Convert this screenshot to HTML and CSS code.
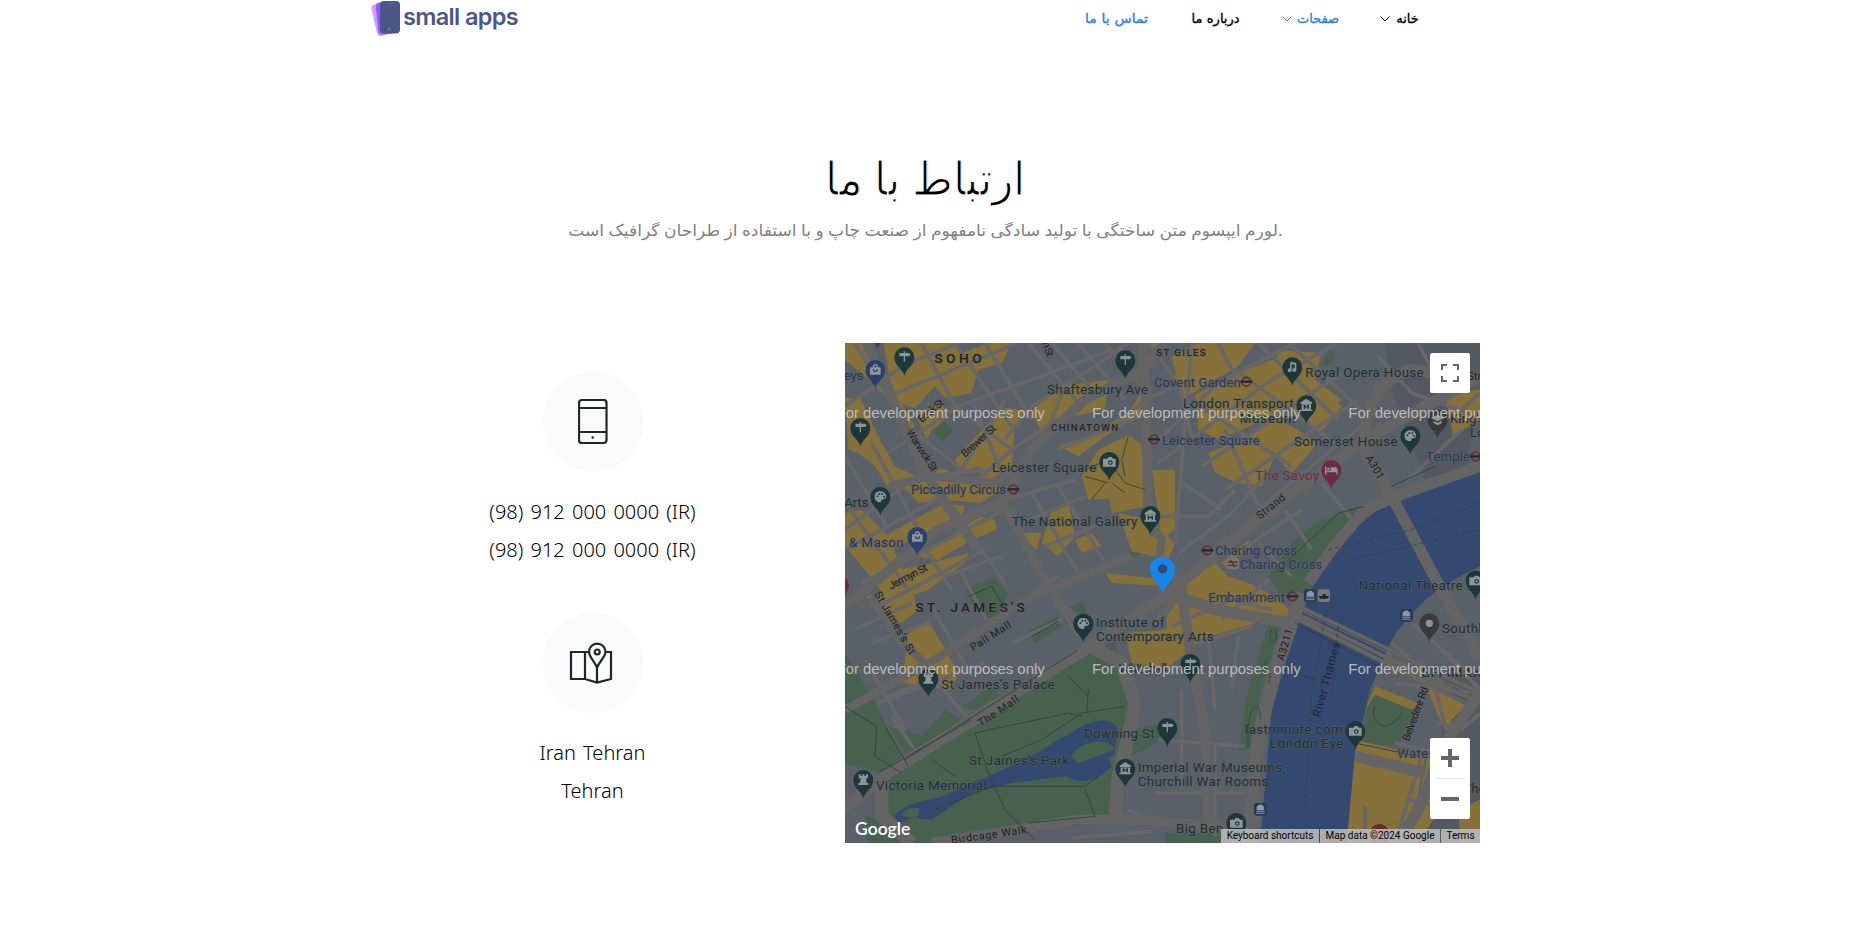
FILE: index.html
```html
<!DOCTYPE html>
<html lang="fa">
<head>
<meta charset="utf-8">
<title>small apps</title>
<link rel="stylesheet" href="styles.css">
</head>
<body>
<header class="navbar">
  <a class="logo">
    <svg class="logo-mark" width="30" height="36" viewBox="0 0 30 36">
      <rect x="3" y="3" width="19" height="32" rx="4" fill="#d09bfb" transform="rotate(-13 12 19)"/>
      <rect x="6" y="2" width="19" height="32" rx="4" fill="#9357fb" transform="rotate(-6 15 18)"/>
      <rect x="9" y="1" width="20" height="32.500" rx="4" fill="#495788"/>
      <path d="M16 3.500h6" stroke="#5d6ba2" stroke-width="1"/>
      <circle cx="18" cy="29" r="1.700" fill="#6271aa"/>
    </svg>
    <span class="logo-text">small apps</span>
  </a>
  <nav class="menu" dir="rtl">
    <a class="item home"><span>خانه</span><svg class="chev" width="10" height="6" viewBox="0 0 10 6"><path d="M.5.5 5 5 9.500.5"/></svg></a>
    <a class="item pages active"><span>صفحات</span><svg class="chev" width="10" height="6" viewBox="0 0 10 6"><path d="M.5.5 5 5 9.500.5"/></svg></a>
    <a class="item about"><span>درباره ما</span></a>
    <a class="item contact active"><span>تماس با ما</span></a>
  </nav>
</header>
<section class="intro">
  <h1><span>ارتباط با ما</span></h1>
  <p><span>لورم ایپسوم متن ساختگی با تولید سادگی نامفهوم از صنعت چاپ و با استفاده از طراحان گرافیک است.</span></p>
</section>
<main class="row">
  <div class="details">
    <div class="card">
      <div class="disc"><svg width="30" height="46" viewBox="0 0 30 46" class="line"><rect x="1" y="1" width="27.500" height="43" rx="3"/><path d="M1 9h27.500M1 33h27.500"/><circle cx="14.700" cy="38.500" r="1.200" class="dot"/></svg></div>
      <p>(98) 912 000 0000 (IR)</p>
      <p>(98) 912 000 0000 (IR)</p>
    </div>
    <div class="card">
      <div class="disc place"><svg width="44" height="42" viewBox="0 0 44 42" class="line"><path d="M21 10H2v27h14l12 3.500L42 37V10h-5M16 10v27M28 26v14"/><path d="M28 25.500C26 20 20 15 20 9.800a8 8 0 0 1 16.500 0C36.500 15 30 20 28 25.500z"/><circle cx="28.200" cy="10" r="2.500"/></svg></div>
      <p>Iran Tehran</p>
      <p>Tehran</p>
    </div>
  </div>
  <div class="map">
    <svg class="canvas" width="635" height="500" viewBox="0 0 1905 1500">
      <defs>
        <path id="pin" d="M0 56C-3 36-30 26-30 0A30 30 0 1 1 30 0C30 26 3 36 0 56z"/>
        <g id="sign"><use href="#pin"/><path class="g" d="M-2-18h4v5h12l5 5-5 5H2v16h-4V-3h-13v-10h13z"/></g>
        <g id="bag"><use href="#pin"/><path class="g" fill-rule="evenodd" d="M-16-8h8c0-13 16-13 16 0h8v22h-32zM-4-8h8c0-7-8-7-8 0zM-8-2c0 12 16 12 16 0h-4c0 6-8 6-8 0z"/></g>
        <g id="art"><use href="#pin"/><path class="g" d="M0-17C-24-17-22 16-1 16c8 0 0-9 8-9C25 8 18-17 0-17z"/><g class="hole"><circle cx="-9" cy="-2" r="3"/><circle cx="-3" cy="-9" r="3"/><circle cx="6" cy="-9" r="3"/><circle cx="11" cy="-1" r="3"/></g></g>
        <g id="museum"><use href="#pin"/><path class="g" fill-rule="evenodd" d="M0-20 17-9v5H-17v-5zM-14-3h28v16h4v4h-36v-4h4zM-8 11h4V4l4 5 4-5v7h4V-1H4L0 4-4-1h-4z"/></g>
        <g id="camera"><use href="#pin"/><path class="g" fill-rule="evenodd" d="M-19-10h13l4-5h9l4 5h8v24h-38zM3-5a7 7 0 1 0 .1 0z"/><circle class="g" cx="3" cy="2" r="3.500"/></g>
        <g id="castle"><use href="#pin"/><path class="g" d="M-14-17h6v5h5v-5h6v5h5v-5h6V-5H8L10 9h5v6h-30V9h5l2-14h-6z"/></g>
        <g id="music"><use href="#pin"/><path class="g" d="M-6-17 12-13V8a6 6 0 1 1-5-6V-8l-9-2V9a6 6 0 1 1-5-6z"/></g>
        <g id="bed"><use href="#pin"/><path class="g" d="M-19-11h4V2H-2V-8h16l5 5v17h-4V7h-30v7h-4z"/><circle class="g" cx="-9" cy="-3" r="4"/></g>
        <g id="dot"><use href="#pin"/><circle class="g" r="11"/></g>
        <g id="school"><use href="#pin"/><path class="g" d="M0-15 20-5 0 5-20-5zM-12 3 0 9 12 3v8L0 17l-12-6z"/></g>
        <g id="tube"><circle r="13" fill="none" stroke="#6d2a2b" stroke-width="5"/><path d="M-18-3.500h36v7h-36z" fill="#1f2940"/></g>
        <g id="pier"><rect x="-19" y="-19" width="38" height="38" rx="7" fill="#243957"/><path d="M-10 2V-9h5v-4h10v4h5V2zM-13 7h26M-13 12h26" fill="#92989f" stroke="#92989f" stroke-width="2.500"/></g>
      </defs>
      <rect width="1905" height="1500" fill="#596067"/>
      <g fill="#545860"><path d="M1620 0H1905V200L1850 390 1740 410 1640 140z"/><path d="M1800 990 1905 1000V1500H1680L1790 1190z"/></g>
      <!-- parks -->
      <g fill="#47614e">
        <path d="M0 930 90 1080 185 1270 110 1290 0 1260z"/>
        <path d="M115 1310 390 1150 690 950 765 915 830 970 870 1150 800 1440 550 1460 260 1500H130L110 1400z"/>
        <path d="M360 735 450 705 490 750 460 820 420 825 375 780z"/>
        <path d="M550 865 640 820 650 850 570 900zM660 800 715 775 725 810 675 830zM770 915 810 895 820 950zM870 1160 950 1140 950 1190 860 1240z"/>
        <path d="M280 250 300 235 325 265 295 295 268 275z"/><path d="M130 1150 230 1180 300 1100 345 1130 290 1180 180 1230zM350 1090 440 1030 460 1060 390 1100z"/>
        <path d="M1270 700 1340 600 1410 540 1570 480 1490 580 1410 740 1310 760z"/><path d="M1270 840 1310 840 1250 1040 1215 1220H1180L1210 1040z"/>
        <path d="M1430 60 1455 20 1470 40 1445 70zM1195 325l30-20 10 20-30 15z"/>
        <path d="M1575 1045 1710 1090 1660 1210 1550 1200z"/><path d="M60 1420 130 1430 150 1500H70zM850 630l60-15v15l-60 15zM960 1470h180v30H960z"/>
      </g>
      <!-- built-up blocks -->
      <g fill="#857139">
        <path d="M0 0H70L100 60 150 150 210 250 185 300 145 180 110 150 60 100 0 50zM0 165 45 165 105 290 150 370 215 400 190 440 130 435 90 370 40 330 10 320z"/>
        <path d="M115 0H330L350 30 430 0H500L470 60 400 80 380 150 300 165 270 130 210 195 160 180 135 110z"/>
        <path d="M210 210 290 180 310 220 260 260 245 290zM330 350 430 240 490 200 510 250 500 380 425 430 400 370 350 390zM185 440 290 375 350 400 430 415 470 440 405 480 300 470 220 480z"/>
        <path d="M0 510 50 500 130 580 180 700 120 760 60 680 0 610z"/>
        <path d="M100 590 170 550 300 480 360 490 345 530 240 570 140 620zM210 640 290 600 400 520 450 530 455 560 380 590 280 650zM110 690 260 660 370 630 360 660 250 740 100 790z"/>
        <path d="M65 760 200 740 220 800 170 840 110 830zM190 870 250 835 290 900 340 990 320 1040 170 1020 180 950z"/>
        <path d="M480 195 550 205 480 290 440 280zM560 205 640 130 790 110 780 200 630 230 600 290zM640 310 740 275 850 210 900 130 890 210 780 280 700 340z"/>
        <path d="M710 400 760 320 850 275 900 310 900 460 730 470zM790 450 900 450 910 490 800 510zM820 510 920 530 990 600 970 650 860 625zM510 570 590 570 575 620zM620 500 670 480 690 580 640 640 590 600zM690 590l50-20 30 40-60 20z"/>
        <path d="M910 0H960L935 45zM980 40 1060 0H1230L1180 70 1110 110 1010 170zM920 380h70v180l-40 30zM1050 155 1180 90 1310 40 1490 190 1430 265 1330 200 1120 290 1060 260zM1290 20 1430 30 1410 110 1490 170 1430 220 1330 130zM1090 330 1190 290 1290 220 1420 300 1340 390 1290 340 1250 430 1180 420 1110 390z"/>
        <path d="M780 690 970 710 960 730 800 720zM840 870 960 860 1060 900 960 980 860 960z"/>
        <path d="M970 760 1100 650 1150 700 1210 720 1290 760 1350 815 1250 835 1060 890 960 910zM1210 590l10 20-80 60-10-10z"/>
        <path d="M1590 1030 1720 1080 1700 1100 1590 1055 1555 1110zM1530 1190 1740 1240 1690 1500H1505zM1740 1020 1870 1080 1820 1130 1810 1180 1780 1120zM1750 1230 1860 1280 1720 1500H1690zM1840 1400 1905 1370v130h-60zM1800 150l105-10v90l-80 50z"/>
      </g>
      <!-- water -->
      <g fill="#34496f">
        <path d="M1905 375C1760 400 1630 460 1530 560L1430 670C1380 780 1360 850 1320 960L1280 1100 1245 1500H1505L1530 1230 1575 1040 1640 890C1720 770 1800 720 1905 670z"/>
        <path d="M150 1425C150 1390 240 1370 280 1365L430 1300 560 1240 640 1190 720 1145C770 1125 800 1130 818 1155L808 1235 790 1245 800 1270C760 1310 720 1330 660 1300L500 1320 380 1350 260 1430 200 1425 145 1450z"/>
      </g>
      <path fill="#47614e" d="M680 1240C690 1210 760 1180 800 1205L810 1220 700 1260zM170 1420C170 1395 220 1390 224 1400L215 1425z"/>
      <!-- minor streets -->
      <g class="minor">
        <path d="M0 190 190 60 420-30M30 0 150 200M130 160 520 0M230 0 330 190 500 320M330 0 500 250M420 0 560 230M130 330 340 190 560 110 800 20M200 260 350 380 480 170M380 170 470 390M480 290 560 190 720 90 850 0M550 0 700 180M620 0 750 150M700 0 840 170M780 0 880 120M640 320 900 215M600 280 660 130M800 260 900 170 990 130M400 410 500 320 640 230"/>
        <path d="M0 480 190 740M0 560 230 390M0 620 330 440M50 720 480 500M100 790 420 620M0 340 130 560M80 300 220 560M240 400 420 380M230 600 320 740M350 530 480 720M500 500 600 720M560 450 700 690M640 430 780 660M480 470 690 410M530 540 720 460M600 610 800 530M30 860 200 780M300 700 470 640M350 690 440 860M420 850 640 700M590 700 700 880M500 900 650 830M260 790 380 1000M80 900 250 840M100 1080 420 960"/>
        <path d="M910 0 1000 120 1040 280M1040 0 990 600M1120 0 1180 120M1240 0 1480 230M1330 0 1560 210M930 300 1120 120 1370-10M940 360 1280 110 1480 0M1070 370 1490 90M1140 440 1540 170M1240 500 1560 240M1050 180 1340 370M1170 80 1470 300M920 520 1090 520 1170 440M1000 630 1150 520 1270 390M1190 620 1370 500M1240 600 1340 700M1320 500 1400 620M1430 420 1530 540M1140 260 1240 490M1000 410 1130 500M1600 40 1700 150 1870 210M1720 0 1780 120M1690 410 1850 260M1850 200 1905 150"/>
        <path d="M980 850 1160 770 1280 800M1130 830 1270 710M1000 720 1120 650M1060 900 1220 850M1180 880 1160 1040M1090 880 1110 1100M940 1190 1200 1210M930 1350 1200 1350M1110 1200V1480M1010 1040V1340M1240 1250V1430M1640 900 1760 1000 1810 1180M1700 840 1860 980M1740 870 1905 1040M1650 1020 1870 1050M1650 1200 1850 1250M1730 1240 1650 1500M1690 1370 1780 1390M1560 1390v110M1780 1140 1850 1160 1905 1110"/>
        <path d="M130 1060 280 1000M140 1120 230 1250M60 950 180 1160M260 1000 390 1150M850 1400 940 1450M680 1485l240-20"/>
      </g>
      <!-- main streets -->
      <g class="major">
        <path class="w30" d="M60-10 130 140 240 390 330 520 400 620M0 790 280 560 470 480 560 320 720 170 880 90 960 0M890-10 900 120 910 490 930 580"/>
        <path class="w24" d="M130 430 260 400 440 420 560 350M470 480 640 780 700 830M0 1100 270 950 560 760 860 640M80 760 170 900 240 960"/>
        <path class="w34" d="M-10 1400 130 1290 400 1120 720 920 960 760 1100 640 1330 460 1560 290 1905 100"/>
        <path class="w40" d="M745 915 830 960 870 1080 850 1180 820 1300 810 1430M110 1310 110 1420 200 1500M60 1320 130 1340"/>
        <path class="w30" d="M260 1500 700 1430 900 1430 1200 1460M1010 740 1040 960 1080 1160 1090 1460"/>
        <path class="w40" d="M1370 750 1290 990 1240 1180 1210 1500"/>
        <path class="w34" d="M1390 720 1460 620 1560 500 1680 450 1905 370M940 740 1110 800 1330 840"/>
        <path class="w34" d="M1540 290 1640 460 1800 760 1905 940M1560 280C1560 180 1620 100 1700 80L1905 110M1905 1050 1800 1200 1720 1400 1660 1500M1530 1240 1740 1290"/>
        <path class="w24" d="M930 850 1010 740M900 520 950 590 940 660 1020 740"/>
        <path class="w14" d="M1330 800 1905 1080M1340 780 1905 1050M1360 830 1870 1085"/>
      </g>
      <g class="bridge"><path d="M1350 795 1640 935M1345 815 1640 965M1650 975 1880 1070M1650 955 1890 1055"/></g>
      <g class="path">
        <path d="M0 1090 95 1150 90 1240M90 1240 170 1290M390 1170 670 1110 710 1120M390 1170 430 1290 480 1400 570 1490M470 1240 590 1190 710 1110 840 1090M730 1040 725 1110M670 1000 728 1060M180 1250 700 920M100 1290 380 1130M270 1400 440 1330 720 1330 760 1300M720 1340 750 1420 550 1440M260 1250 330 1300M120 1150 190 1270M370 760 440 730 470 780M560 880 640 835"/>
        <path d="M720 380 790 350 840 420 900 440M790 420 720 400M780 420 740 470M800 420 840 450M850 280 830 350 840 400M1290 690 1480 510 1560 490M1640 430 1770 370M1350 840 1600 970M1280 860C1260 910 1310 910 1290 860M1265 950C1245 980 1290 990 1270 1020M1210 1210C1200 1080 1250 1060 1245 1130M1590 1090C1570 1130 1620 1190 1670 1110M1320 980 1410 1010M1530 1200 1720 1240"/>
        <path d="M1500 700 1440 820 1400 1050 1380 1400M1480 850 1460 1050M1450 620 1700 560 1905 480M1520 650 1905 560" stroke-dasharray="12 9"/>
      </g>
      <!-- pins -->
      <g fill="#1d373b">
        <use href="#sign" x="178" y="43"/><use href="#sign" x="46" y="255"/><use href="#sign" x="841" y="52"/><use href="#camera" x="793" y="357"/><use href="#art" x="106" y="462"/><use href="#museum" x="916" y="519"/>
        <use href="#music" x="1342" y="73"/><use href="#museum" x="1384" y="187"/><use href="#art" x="1696" y="279"/><use href="#camera" x="1892" y="713"/>
        <use href="#art" x="715" y="842"/><use href="#castle" x="250" y="1007"/><use href="#castle" x="55" y="1311"/><use href="#museum" x="841" y="1277"/><use href="#sign" x="967" y="1155"/><use href="#sign" x="1036" y="963"/><use href="#camera" x="1531" y="1164"/><use href="#camera" x="1174" y="1440"/>
      </g>
      <g fill="#2c406b"><use href="#bag" x="91" y="81"/><use href="#bag" x="217" y="582"/></g>
      <use href="#pin" x="98" y="-38" fill="#2c406b"/>
      <use href="#bed" x="1459" y="381" fill="#6b2b43"/><use href="#pin" x="1603" y="1473" fill="#6b2b2d"/><use href="#pin" x="-18" y="727" fill="#6b2b43"/>
      <g fill="#393a3b"><use href="#school" x="1778" y="230"/><use href="#dot" x="1753" y="841"/></g>
      <use href="#tube" x="505" y="439"/><use href="#tube" x="927" y="289"/><use href="#tube" x="1204" y="116"/><use href="#tube" x="1087" y="622"/><use href="#tube" x="1342" y="760"/><use href="#tube" x="1892" y="340"/>
      <rect x="1144" y="645" width="38" height="34" rx="6" fill="#777"/><path d="M1148 657h30M1148 667h30M1156 650l14 24" stroke="#6d2a2b" stroke-width="4"/>
      <use href="#pier" x="1396" y="758"/><use href="#pier" x="1684" y="817"/><use href="#pier" x="1246" y="1399"/>
      <rect x="1418" y="739" width="37" height="38" rx="7" fill="#777"/><path d="M1421 759l4 8h22l6-8h-11v-6h-9v6z" fill="#222"/>
      <!-- labels -->
      <g class="lbl big"><text x="268" y="60" textLength="142">SOHO</text><text x="211" y="808" textLength="328">ST. JAMES'S</text></g>
      <g class="lbl area"><text x="618" y="263" textLength="201">CHINATOWN</text><text x="934" y="38" textLength="148">ST GILES</text></g>
      <g class="lbl poi">
        <text x="606" y="153" textLength="303">Shaftesbury Ave</text><text x="441" y="387" textLength="313">Leicester Square</text><text x="501" y="549" textLength="376">The National Gallery</text><text x="-2" y="491" textLength="72">Arts</text>
        <text x="1381" y="102" textLength="355">Royal Opera House</text><text x="1014" y="196" textLength="332">London Transport</text><text x="1184" y="239" textLength="168">Museum</text><text x="1347" y="309" textLength="311">Somerset House</text><text x="1541" y="740" textLength="312">National Theatre</text>
        <text x="753" y="852" textLength="205">Institute of</text><text x="753" y="895" textLength="353">Contemporary Arts</text><text x="289" y="1038" textLength="340">St James's Palace</text><text x="717" y="1186" textLength="212">Downing St</text><text x="93" y="1340" textLength="332">Victoria Memorial</text>
        <text x="878" y="1286" textLength="443">Imperial War Museums,</text><text x="878" y="1329" textLength="392">Churchill War Rooms</text><text x="1200" y="1173" textLength="293">lastminute.com</text><text x="1275" y="1215" textLength="220">London Eye</text><text x="993" y="1469" textLength="142">Big Ben</text>
        <text x="372" y="1266" textLength="300">St James's Park</text><text x="-25" y="291">y</text><text x="821" y="990" textLength="145">Whitehall</text><text x="1730" y="1003" textLength="178">BFI IMAX</text><text x="1855" y="1349">The</text>
      </g>
      <g class="lbl shop"><text x="-3" y="112" textLength="58">eys</text><text x="12" y="613" textLength="164">&amp; Mason</text></g>
      <g class="lbl transit"><text x="198" y="453" textLength="285">Piccadilly Circus</text><text x="951" y="306" textLength="293">Leicester Square</text><text x="927" y="131" textLength="260">Covent Garden</text><text x="1110" y="635" textLength="246">Charing Cross</text><text x="1184" y="678" textLength="248">Charing Cross</text><text x="1090" y="777" textLength="230">Embankment</text><text x="1743" y="353" textLength="132">Temple</text><text x="1657" y="1244" textLength="165">Waterloo</text></g>
      <g class="lbl grey"><text x="1791" y="870" textLength="200">Southbank</text><text x="1815" y="240">King's</text><text x="1875" y="283">Lo</text></g>
      <text class="lbl savoy" x="1231" y="411" textLength="192">The Savoy</text>
      <g class="lbl road">
        <text transform="translate(230 240) rotate(-40)" textLength="90">Beak St</text><text transform="translate(183 268) rotate(57)" textLength="143">Warwick St</text><text transform="translate(360 344) rotate(-42)" textLength="128">Brewer St</text><text transform="translate(138 740) rotate(-28)" textLength="126">Jermyn St</text><text transform="translate(88 753) rotate(60)" textLength="212">St James's St</text>
        <text transform="translate(384 925) rotate(-32)" textLength="138">Pall Mall</text><text transform="translate(408 1152) rotate(-34)" textLength="140">The Mall</text><text transform="translate(320 1502) rotate(-8)" textLength="228">Birdcage Walk</text><text transform="translate(1244 530) rotate(-38)" textLength="100">Strand</text><text transform="translate(1561 344) rotate(60)" textLength="78">A301</text><text transform="translate(1316 955) rotate(-74)" textLength="98">A3211</text>
        <text transform="translate(1692 1196) rotate(-70)" textLength="170">Belvedere Rd</text><text transform="translate(592 0) rotate(72)" textLength="45">n St</text><text x="1868" y="110">Str</text>
      </g>
      <text class="thames" transform="translate(1426 1124) rotate(-75)" textLength="230">River Thames</text>
      <!-- selected place -->
      <circle cx="927" cy="678" r="11" fill="#2c406b"/>
      <circle cx="952" cy="678" r="15" fill="#34496f"/>
      <path d="M953 748C945 728 915 705 915 679a37.500 37.500 0 1 1 75 0C990 705 961 728 953 748zM953 664a14 14 0 1 0 .1 0z" fill="#1686e8" fill-rule="evenodd"/>
      <g class="dev"><text x="-25" y="225" textLength="624">For development purposes only</text><text x="741" y="225" textLength="626">For development purposes only</text><text x="1510" y="225" textLength="626">For development purposes only</text><text x="-25" y="993" textLength="624">For development purposes only</text><text x="741" y="993" textLength="626">For development purposes only</text><text x="1510" y="993" textLength="626">For development purposes only</text></g>
      <text class="google" x="30" y="1476" textLength="166" lengthAdjust="spacingAndGlyphs">Google</text>
    </svg>
    <button class="full"><svg width="18" height="18" viewBox="0 0 18 18"><path d="M1 6V1h5M12 1h5v5M17 12v5h-5M6 17H1v-5"/></svg></button>
    <div class="zoom"><svg width="18" height="18" viewBox="0 0 18 18"><path d="M9 0v18M0 9h18"/></svg><i></i><svg width="18" height="18" viewBox="0 0 18 18"><path d="M0 9h18"/></svg></div>
    <div class="legal"><span class="k">Keyboard shortcuts</span><span class="d">Map data ©2024 Google</span><span class="t">Terms</span></div>
  </div>
</main>
</body>
</html>
```
FILE: styles.css
```css
* { box-sizing: border-box; }
html { background: #fff; overflow: hidden; }
body { margin: 0; width: 1850px; height: 934px; overflow: hidden; font-family: "Noto Sans", "DejaVu Sans", sans-serif; color: #000; }
p, h1 { margin: 0; }
.navbar { width: 1110px; height: 38px; margin: 0 auto; display: flex; justify-content: space-between; align-items: flex-start; }
.logo { display: flex; padding-left: 1px; }
.logo-text { margin-left: 2px; font: 600 23.5px/34px Inter, sans-serif; letter-spacing: -.65px; color: #495788; white-space: nowrap; }
.menu { display: flex; gap: 41px; padding-right: 60px; font-size: 13px; line-height: 37px; -webkit-text-stroke: .35px currentColor; }
.item { display: flex; align-items: center; gap: 5px; white-space: nowrap; }
.item span { display: flex; justify-content: center; }
.home span { width: 25px; }
.pages span { width: 42px; }
.about span { width: 51px; word-spacing: 1px; }
.contact span { width: 65px; word-spacing: 1px; transform: scaleX(1.08); }
.active { color: #2e7eed; }
.chev path { fill: none; stroke: currentColor; stroke-width: 1; }
.intro { height: 305px; padding-top: 104px; text-align: center; }
.intro h1 { height: 74px; font-weight: 300; font-size: 46px; line-height: 70px; direction: rtl; -webkit-text-stroke: 1.1px #fff; }
.intro h1 span { transform: scaleX(.96); }
.intro p { font-size: 16px; line-height: 28px; color: #808080; white-space: nowrap; }
.intro span { display: inline-block; }
.intro p span { transform: scaleX(1.068); }
.row { width: 1110px; margin: 0 auto; display: flex; gap: 30px; }
.details { width: 445px; padding-top: 29px; text-align: center; }
.card { height: 241px; }
.card p { font-size: 20px; font-weight: 300; line-height: 38px; word-spacing: 2px; }
.disc { width: 100px; height: 100px; margin: 0 auto 21px; border-radius: 50%; background: #fafafa; display: flex; align-items: center; justify-content: center; }
.place { padding-right: 4px; }
.line { fill: none; stroke: #212529; stroke-width: 2.2; }
.line .dot { fill: #212529; stroke: none; }
.map { position: relative; width: 635px; height: 500px; overflow: hidden; }
.canvas { display: block; }
.minor { fill: none; stroke: #676668; stroke-width: 11; stroke-linejoin: round; }
.major { fill: none; stroke: #646465; stroke-linejoin: round; }
.w14 { stroke-width: 12; }
.w24 { stroke-width: 24; }
.w30 { stroke-width: 30; }
.w34 { stroke-width: 34; }
.w40 { stroke-width: 40; }
.bridge { fill: none; stroke: #756d55; stroke-width: 3; }
.path { fill: none; stroke: #294135; stroke-width: 2.5; }
.g { fill: #8c9698; }
.hole { fill: #1d373b; }
.lbl { font-family: Roboto, sans-serif; font-size: 40px; paint-order: stroke; stroke: #62666a; stroke-opacity: .55; stroke-width: 4px; stroke-linejoin: round; }
.big { font-size: 41px; font-weight: 500; fill: #222; }
.area { font-size: 29px; font-weight: 500; fill: #252525; }
.poi { fill: #1b3133; }
.shop { fill: #26365a; }
.transit { font-size: 39px; fill: #29365a; }
.grey { fill: #2d2e30; }
.savoy { fill: #702d47; }
.road { font-size: 32px; fill: #202020; }
.thames { font: 35px Roboto, sans-serif; fill: #1a2840; }
.dev { font: 45px "Liberation Sans", Arial, sans-serif; fill: #bababa; }
.google { font: 600 50px Lato, sans-serif; fill: #fff; }
.full, .zoom { position: absolute; right: 10px; width: 40px; background: #fff; border: 0; border-radius: 2px; padding: 0; display: flex; align-items: center; justify-content: center; }
.full { top: 10px; height: 40px; }
.full path { fill: none; stroke: #666; stroke-width: 2; }
.zoom { top: 395px; height: 81px; flex-direction: column; gap: 11px; }
.zoom i { width: 30px; height: 1px; background: #e6e6e6; }
.zoom path { stroke: #666; stroke-width: 4; }
.legal { position: absolute; right: 0; bottom: 0; display: flex; gap: 1px; height: 14px; font: 10px/14px Roboto, sans-serif; color: #000; white-space: nowrap; }
.legal span { background: rgba(190, 190, 190, .86); text-align: center; }
.k { width: 98px; }
.d { width: 120px; }
.t { width: 39px; }
```
